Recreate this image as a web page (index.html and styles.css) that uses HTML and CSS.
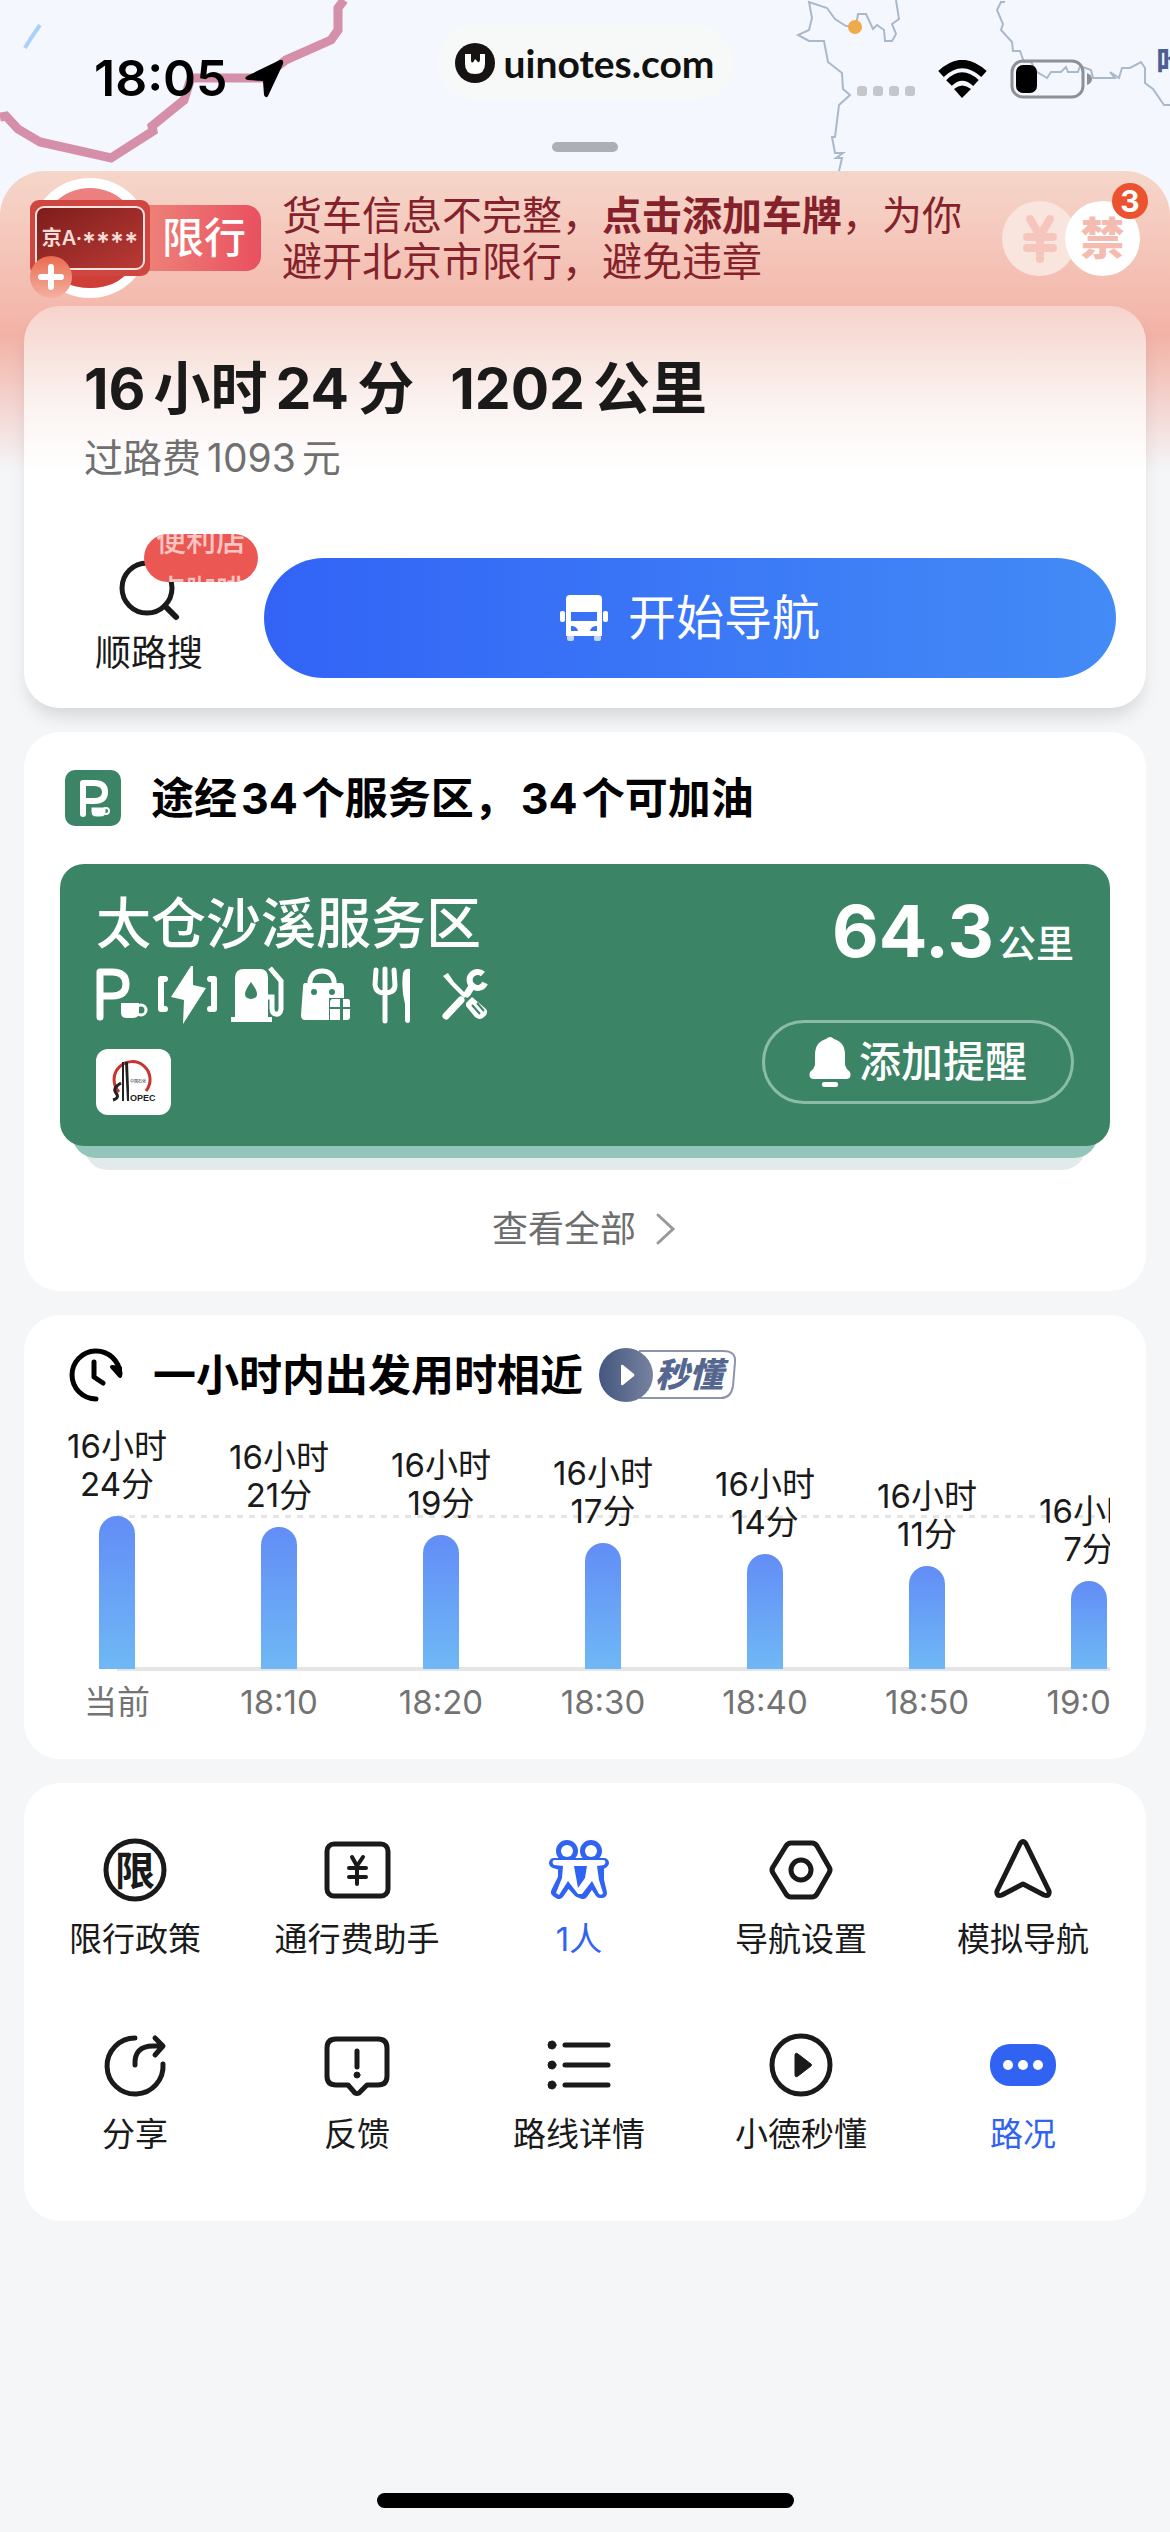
FILE: index.html
```html
<!DOCTYPE html>
<html lang="zh-CN">
<head>
    <meta charset="UTF-8">
    <meta name="viewport" content="width=device-width, initial-scale=1.0">
    <title>路线规划</title>
    <link rel="stylesheet" href="styles.css">
</head>
<body>
    <header class="top">
        <!-- mapa de fundo -->
        <svg class="map" viewBox="0 0 1170 220" preserveAspectRatio="xMidYMin slice" aria-hidden="true">
            <path d="M0 117 L6 116 L18 129 L40 142 L111 158 L153 131 L152 126 L184 100 L191 78 L262 78 L286 60 L331 40 L338 30 L338 8 L344 0" fill="none" stroke="#d68fa8" stroke-width="9"/>
            <path d="M40 25 L31 38 L25 48" fill="none" stroke="#a9d1fb" stroke-width="4"/>
            <g fill="none" stroke="#a9b9cb" stroke-width="2">
                <path d="M896 0 L899 19 L892 24 L896 34 L892 41 L885 41 L884 30 L877 25 L873 29 L866 14 L858 14 L856 26 L846 26 L835 19 L827 8 L809 2 L812 18 L809 30 L798 35 L809 41 L824 41 L828 62 L842 73 L843 89 L850 95 L839 105 L835 137 L832 137 L835 153 L843 153 L836 158 L842 158 L839 171"/>
                <path d="M1005 2 L1001 2 L997 10 L1003 24 L1001 30 L1012 42 L1013 51 L1020 51 L1024 62 L1031 62 L1037 72 L1047 78 L1051 72 L1061 72 L1066 67 L1068 72 L1078 72 L1080 66 L1091 70 L1093 78 L1115 78 L1110 72 L1119 78 L1122 68 L1130 68 L1141 62 L1145 68 L1145 83 L1153 89 L1164 105 L1170 105"/>
            </g>
            <circle cx="855" cy="27" r="7" fill="#eeaa4b"/>
            <text class="map-city" x="1156" y="75">哈尔滨</text>
        </svg>

        <div class="status">
            <div class="status-left">
                <span class="time">18:05</span>
                <svg width="40" height="40" viewBox="0 0 40 40" aria-hidden="true"><path d="M36 1 Q40 0 39 5 L24 37 Q22 40 20 36 L19 22 L4 21 Q-1 20 3 17 Z"/></svg>
            </div>
            <div class="watermark">
                <svg width="40" height="40" viewBox="0 0 40 40" aria-hidden="true">
                    <circle cx="20" cy="20" r="20" fill="#161312"/>
                    <path d="M10 11 L16 11 L16 18 Q17 21 19 18 L20 16 L22 18 Q24 21 25 17 L25 11 L30 11 L30 21 Q30 31 20 31 Q10 31 10 21 Z" fill="#fff"/>
                </svg>
                <span>uinotes.com</span>
            </div>
            <div class="status-right">
                <span class="dots"><i></i><i></i><i></i><i></i></span>
                <svg width="51" height="38" viewBox="0 0 51 38" aria-hidden="true">
                    <path d="M4 14 Q25 -6 47 14" fill="none" stroke="#000" stroke-width="8"/>
                    <path d="M12 23 Q25 10 39 23" fill="none" stroke="#000" stroke-width="8"/>
                    <path d="M17 29 Q25 22 34 29 L25 38 Z"/>
                </svg>
                <svg width="82" height="40" viewBox="0 0 82 40" aria-hidden="true">
                    <rect x="2" y="2" width="71" height="36" rx="11" fill="none" stroke="#8f9095" stroke-width="3"/>
                    <rect x="6" y="6" width="21" height="28" rx="7"/>
                    <path d="M77 14 Q82 16 82 20 Q82 24 77 26 Z" fill="#8f9095"/>
                </svg>
            </div>
        </div>
        <div class="handle"></div>
    </header>

    <main class="sheet">
        <a class="notice" href="#plate">
            <svg class="plate" width="232" height="122" viewBox="0 0 232 122" aria-hidden="true">
                <defs>
                    <linearGradient id="tag"><stop offset="0" stop-color="#ef8c7e"/><stop offset="1" stop-color="#e9505f"/></linearGradient>
                    <linearGradient id="dark" x1="0" y1="0" x2="1" y2="1"><stop offset="0" stop-color="#7c1d1b"/><stop offset="1" stop-color="#bb3a36"/></linearGradient>
                    <linearGradient id="plus" x1="0" y1="0" x2="0" y2="1"><stop offset="0" stop-color="#ea6c50"/><stop offset="1" stop-color="#f4b09f"/></linearGradient>
                </defs>
                <circle cx="60" cy="60" r="60" fill="#fff"/>
                <circle cx="60" cy="60" r="50" fill="#ec8080"/>
                <path d="M14 80 H107 Q94 110 60 110 Q26 110 14 80 Z" fill="#cf3e37"/>
                <rect x="90" y="27" width="141" height="66" rx="15" fill="url(#tag)"/>
                <rect x="0" y="22" width="120" height="76" rx="9" fill="#cf4540"/>
                <rect x="6" y="29" width="108" height="62" rx="8" fill="url(#dark)" stroke="#fbe2de" stroke-width="2"/>
                <text class="plate-no" x="60" y="67">京A·<tspan class="plate-mask" dy="6">****</tspan></text>
                <text class="plate-tag" x="174" y="75">限行</text>
                <circle cx="21" cy="99" r="21" fill="url(#plus)"/>
                <path d="M21 89 V109 M11 99 H31" stroke="#fff" stroke-width="6" stroke-linecap="round"/>
            </svg>
            <p class="notice-text">货车信息不完整，<strong>点击添加车牌</strong>，为你避开北京市限行，避免违章</p>
            <span class="limits">
                <span class="limit limit-fee">
                    <svg width="34" height="48" viewBox="0 0 34 48" aria-hidden="true"><path d="M7 4 L17 21 L27 4 M4 22 H30 M4 33 H30 M17 21 V44" fill="none" stroke="#f6c6bc" stroke-width="8" stroke-linecap="round" stroke-linejoin="round"/></svg>
                </span>
                <span class="limit">禁</span>
                <b class="count">3</b>
            </span>
        </a>

        <section class="card summary">
            <h1 class="route"><b>16</b>小时<b>24</b>分<b class="dist">1202</b>公里</h1>
            <p class="toll">过路费<span>1093</span>元</p>
            <div class="actions">
                <button class="search" type="button">
                    <svg width="64" height="64" viewBox="0 0 64 64" aria-hidden="true"><circle cx="30" cy="30" r="25" fill="none" stroke="#1a1a1a" stroke-width="5"/><path d="M48 48 L59 59" stroke="#1a1a1a" stroke-width="6" stroke-linecap="round"/></svg>
                    <span>顺路搜</span>
                    <span class="hint"><i>便利店</i><i>点咖啡</i></span>
                </button>
                <button class="start" type="button">
                    <svg width="48" height="48" viewBox="0 0 48 48" fill="#fff" aria-hidden="true">
                        <path fill-rule="evenodd" d="M10 1 H38 Q42 1 42 5 V42 H6 V5 Q6 1 10 1 Z M11 18 V27 H37 V18 Z M11 32 Q17 32 18 37 H11 Z M37 32 Q31 32 30 37 H37 Z"/>
                        <rect x="0" y="17" width="5" height="11" rx="2"/><rect x="43" y="17" width="5" height="11" rx="2"/>
                        <rect x="7" y="41" width="7" height="6" rx="2" opacity=".7"/><rect x="34" y="41" width="7" height="6" rx="2" opacity=".7"/>
                    </svg>
                    开始导航
                </button>
            </div>
        </section>

        <section class="card areas">
            <h2 class="head">
                <svg class="area-icon" width="56" height="56" viewBox="0 0 56 56" aria-hidden="true">
                    <rect width="56" height="56" rx="10" fill="#3b8466"/>
                    <path d="M18 44 V13 H29 Q40 13 40 22 Q40 31 29 31 H18" fill="none" stroke="#fff" stroke-width="6" stroke-linecap="round" stroke-linejoin="round"/>
                    <path d="M26 37 H41 V42 Q41 47 35 47 H32 Q26 47 26 42 Z" fill="#fff" stroke="#3b8466" stroke-width="1"/>
                    <circle cx="41" cy="41" r="3" fill="none" stroke="#fff" stroke-width="2"/>
                </svg>
                <span>途经<b>34</b>个服务区，<b>34</b>个可加油</span>
            </h2>
            <article class="service">
                <div>
                    <h3 class="service-name">太仓沙溪服务区</h3>
                    <svg class="facilities" width="396" height="60" viewBox="0 0 396 60" aria-hidden="true">
                        <g fill="none" stroke="#fff" stroke-width="7" stroke-linecap="round" stroke-linejoin="round">
                            <path d="M4 52 V7 H16 Q30 7 30 19 Q30 31 16 31 H4"/>
                            <path d="M69 14 H65 V44 H69 M114 14 H118 V44 H114" stroke-width="6"/>
                        </g>
                        <path d="M24 37 H44 V47 Q44 54 37 54 H30 Q24 54 24 47 Z" fill="#fff" stroke="#3b8466" stroke-width="2"/>
                        <circle cx="45" cy="45" r="5" fill="none" stroke="#fff" stroke-width="3"/>
                        <path d="M95 1 L75 32 L88 35 L87 59 L110 23 L97 20 L97 1 Z" fill="#fff"/>
                        <path fill-rule="evenodd" d="M139 52 V13 Q139 4 148 4 H164 Q172 4 172 13 V52 H176 V57 H135 V52 Z M155 17 Q143 33 155 34 Q167 33 155 17 Z" fill="#fff"/>
                        <path d="M174 3 L185 16 V44 Q184 50 180 49 Q176 49 176 43 V32 H172" fill="none" stroke="#fff" stroke-width="5"/>
                        <path d="M214 20 V16 Q216 6 226 6 Q236 6 238 16 V20" fill="none" stroke="#fff" stroke-width="5"/>
                        <path d="M209 18 H245 Q248 18 248 22 V33 H233 V55 H209 Q205 55 205 50 L207 22 Q207 18 209 18 Z" fill="#fff"/>
                        <circle cx="218" cy="27" r="3" fill="#3b8466"/><circle cx="236" cy="27" r="3" fill="#3b8466"/>
                        <path d="M234 37 Q234 34 237 34 H244 V42 H234 Z M247 34 H252 Q254 34 254 37 V42 H247 Z M234 44 H244 V55 H234 Z M247 44 H254 V52 Q254 55 251 55 H247 Z" fill="#fff"/>
                        <g fill="none" stroke="#fff" stroke-linecap="round">
                            <path d="M280 5 L279 20 Q280 28 288 28 Q299 28 299 20 L298 5 M289 4 V56" stroke-width="5"/>
                        </g>
                        <path d="M307 8 Q309 3 314 4 V55 Q314 58 312 58 Q309 58 309 55 V39 Q305 24 307 8 Z" fill="#fff"/>
                        <path d="M347 11 L352 8 L358 17 L371 30 L368 33 L355 20 Z M370 38 L376 32 L390 44 Q393 48 388 52 Q384 56 379 52 L370 41 Z" fill="#fff"/>
                        <path d="M350 51 L365 35 M371 29 L376 21" fill="none" stroke="#fff" stroke-width="7" stroke-linecap="round"/>
                        <path d="M387 9 A8 8 0 1 0 389 18" fill="none" stroke="#fff" stroke-width="6"/>
                        <path d="M376 40 L384 49 M381 38 L388 46" stroke="#3b8466" stroke-width="2"/>
                    </svg>
                    <!-- logo do posto -->
                    <svg class="brand" width="75" height="66" viewBox="0 0 75 66" role="img" aria-label="SINOPEC">
                        <rect width="75" height="66" rx="12" fill="#fff"/>
                        <path d="M23 43 A18 18 0 1 1 50 42" fill="none" stroke="#c8342f" stroke-width="3"/>
                        <path d="M26 13 H28 V52 H26 Z M29 13 H32 L33 40 V52 H31 Z" fill="#222"/>
                        <path d="M25 34 Q16 39 20 44 Q24 49 17 51" fill="none" stroke="#222" stroke-width="3"/>
                        <text class="brand-name" x="34" y="52">OPEC</text>
                        <text class="brand-cn" x="34" y="34">中国石化</text>
                    </svg>
                </div>
                <div class="service-side">
                    <p class="km"><b>64.3</b>公里</p>
                    <button class="remind" type="button">
                        <svg width="42" height="52" viewBox="0 0 42 52" fill="#fff" aria-hidden="true"><path d="M17 3 Q21 -1 25 3 Q36 6 36 19 V29 Q37 33 41 36 Q43 43 37 43 H5 Q-1 43 1 36 Q5 33 6 29 V19 Q6 6 17 3 Z"/><rect x="13" y="46" width="16" height="5" rx="2"/></svg>
                        添加提醒
                    </button>
                </div>
            </article>
            <a class="more" href="#areas">查看全部
                <svg width="24" height="34" viewBox="0 0 24 34" aria-hidden="true"><path d="M4 3 L19 17 L4 31" fill="none" stroke="#999" stroke-width="3" stroke-linecap="round"/></svg>
            </a>
        </section>

        <section class="card depart">
            <h2 class="head">
                <svg class="clock" width="54" height="54" viewBox="0 0 54 54" fill="none" stroke="#000" aria-hidden="true">
                    <path d="M27 51 A24 24 0 1 1 51 26" stroke-width="5" stroke-linecap="round"/>
                    <path d="M43 19 L51 28 L51 20 Z" fill="#000" stroke-width="4" stroke-linejoin="round"/>
                    <path d="M25 14 V29 L34 35" stroke-width="5" stroke-linecap="round" stroke-linejoin="round"/>
                </svg>
                <span>一小时内出发用时相近</span>
                <svg class="learn" width="138" height="54" viewBox="0 0 138 54" role="img" aria-label="秒懂">
                    <defs><linearGradient id="navy"><stop offset="0" stop-color="#44577f"/><stop offset="1" stop-color="#77829f"/></linearGradient></defs>
                    <path d="M40 3 H124 Q137 3 136 14 L134 38 Q132 50 122 50 H40" fill="#fff" stroke="#8c95ad" stroke-width="2"/>
                    <circle cx="27" cy="27" r="27" fill="url(#navy)"/>
                    <path d="M22 18 Q22 16 24 17 L35 26 Q36 27 35 28 L24 37 Q22 38 22 36 Z" fill="#fff"/>
                    <text class="learn-text" x="56" y="39">秒懂</text>
                </svg>
            </h2>
            <div class="chart">
                <div class="plot">
                    <div class="col"><span>16小时<br>24分</span><i class="bar" style="height: 153px"></i></div>
                    <div class="col"><span>16小时<br>21分</span><i class="bar" style="height: 142px"></i></div>
                    <div class="col"><span>16小时<br>19分</span><i class="bar" style="height: 134px"></i></div>
                    <div class="col"><span>16小时<br>17分</span><i class="bar" style="height: 126px"></i></div>
                    <div class="col"><span>16小时<br>14分</span><i class="bar" style="height: 115px"></i></div>
                    <div class="col"><span>16小时<br>11分</span><i class="bar" style="height: 103px"></i></div>
                    <div class="col"><span>16小时<br>7分</span><i class="bar" style="height: 88px"></i></div>
                </div>
                <div class="axis">
                    <span>当前</span><span>18:10</span><span>18:20</span><span>18:30</span><span>18:40</span><span>18:50</span><span>19:00</span>
                </div>
            </div>
        </section>

        <nav class="card tools">
            <button class="tool" type="button">
                <svg viewBox="0 0 64 64" aria-hidden="true"><circle cx="32" cy="32" r="29"/><text class="tool-char" x="32" y="47">限</text></svg>
                限行政策
            </button>
            <button class="tool" type="button">
                <svg viewBox="0 0 64 64" aria-hidden="true"><rect x="2" y="6" width="61" height="52" rx="7"/><path d="M27 19 L32 28 L38 19 M24 30 H41 M24 39 H41 M32 28 V46" stroke-width="4"/></svg>
                通行费助手
            </button>
            <button class="tool active" type="button">
                <!-- duas pessoas lado a lado -->
                <svg viewBox="0 0 64 64" aria-hidden="true">
                    <g class="pair-outline">
                        <circle cx="20" cy="13" r="6"/><circle cx="44" cy="13" r="6"/>
                        <path d="M7 25 H57 L52 28 L52 42 L55 55 H53 L45 43 L36 56 L31 54 L21 43 L12 56 L9 54 L16 40 V28 Z"/>
                    </g>
                    <circle class="fill-white" cx="20" cy="13" r="6"/><circle class="fill-white" cx="44" cy="13" r="6"/>
                    <path class="fill-white" d="M7 22 H57 Q60 24 57 27 L50 28 L52 42 L56 55 Q55 58 52 56 L45 43 L35 56 L31 56 L21 43 L12 57 L9 55 L15 40 L16 28 L7 27 Q4 24 7 22 Z"/>
                    <path d="M27 28 H40 L38 40 L31 50 Z" fill="#3163f2" stroke="none"/>
                </svg>
                1人
            </button>
            <button class="tool" type="button">
                <svg viewBox="0 0 64 64" aria-hidden="true"><path d="M22 5 H43 Q46 5 48 8 L60 29 Q62 32 60 35 L48 56 Q46 59 43 59 H22 Q19 59 17 56 L4 35 Q2 32 4 29 L17 8 Q19 5 22 5 Z"/><circle cx="32" cy="32" r="10"/></svg>
                导航设置
            </button>
            <button class="tool" type="button">
                <svg viewBox="0 0 64 64" aria-hidden="true"><path d="M29 6 Q32 1 35 6 L58 53 Q59 59 53 57 L32 46 L11 57 Q5 59 6 53 Z"/></svg>
                模拟导航
            </button>
            <button class="tool" type="button">
                <svg viewBox="0 0 64 64" aria-hidden="true"><path d="M32 5 A28 28 0 1 0 60 31 M32 32 Q31 13 50 13 H58 M52 5 L60 13 L52 22"/></svg>
                分享
            </button>
            <button class="tool" type="button">
                <svg viewBox="0 0 64 64" aria-hidden="true"><path d="M11 6 H53 Q62 6 62 15 V43 Q62 52 53 52 H42 L34 60 Q32 61 30 60 L23 52 H11 Q2 52 2 43 V15 Q2 6 11 6 Z M32 18 V34"/><circle class="dot" cx="32" cy="42" r="3"/></svg>
                反馈
            </button>
            <button class="tool" type="button">
                <svg viewBox="0 0 64 64" aria-hidden="true"><path d="M18 12 H61 M18 32 H61 M18 52 H61"/><circle class="dot" cx="5" cy="12" r="4"/><circle class="dot" cx="5" cy="32" r="4"/><circle class="dot" cx="5" cy="52" r="4"/></svg>
                路线详情
            </button>
            <button class="tool" type="button">
                <svg viewBox="0 0 64 64" aria-hidden="true"><circle cx="32" cy="32" r="29"/><path class="dot" d="M26 22 Q26 19 29 21 L42 31 Q43 32 42 33 L29 43 Q26 45 26 42 Z"/></svg>
                小德秒懂
            </button>
            <button class="tool active" type="button">
                <svg viewBox="0 0 64 64" aria-hidden="true"><rect x="-1" y="11" width="66" height="42" rx="20" fill="#3163f2" stroke="none"/><circle class="fill-white" cx="17" cy="32" r="5"/><circle class="fill-white" cx="32" cy="32" r="5"/><circle class="fill-white" cx="47" cy="32" r="5"/></svg>
                路况
            </button>
        </nav>
        <div class="home-bar"></div>
    </main>
</body>
</html>
```

FILE: styles.css
```css
* {
    box-sizing: border-box;
}
body {
    margin: 0;
    min-height: 100vh;
    display: flex;
    flex-direction: column;
    background-color: #f5f7ff;
    color: #1a1a1a;
    font-family: Inter, "Noto Sans CJK SC", sans-serif;
}
h1, h2, h3, p {
    margin: 0;
}
b, strong {
    font-weight: 700;
}
svg {
    display: block;
    flex: none;
}
i {
    font-style: normal;
}
button {
    border: none;
    background: none;
    padding: 0;
    color: inherit;
    font-family: inherit;
    cursor: pointer;
}
a {
    color: inherit;
    text-decoration: none;
}

/* topo */
.top {
    position: relative;
    padding: 25px 0 19px;
}
.map {
    position: absolute;
    top: 0;
    left: 0;
    width: 100%;
    height: 220px;
}
.map-city {
    font-size: 34px;
    font-weight: 700;
    fill: #4a5f95;
}
.status {
    position: relative;
    display: grid;
    grid-template-columns: 1fr auto 1fr;
    align-items: end;
}
.status-left, .status-right {
    display: flex;
    align-items: center;
    height: 43px;
}
.status-left {
    padding-left: 94px;
    gap: 16px;
    color: #000;
}
.time {
    font-size: 50px;
    font-weight: 600;
    line-height: 43px;
}
.watermark {
    display: flex;
    align-items: center;
    gap: 8px;
    height: 75px;
    padding: 0 18px;
    border-radius: 38px;
    background-color: #f7f8f8;
    color: #111;
    font-family: Lato, sans-serif;
    font-size: 39px;
    font-weight: 700;
    line-height: 42px;
}
.status-right {
    justify-content: flex-end;
    gap: 22px;
    padding-right: 78px;
}
.dots {
    display: flex;
    gap: 6px;
    padding-top: 24px;
}
.dots i {
    width: 10px;
    height: 10px;
    border-radius: 3px;
    background-color: #c5c6cb;
}
.handle {
    position: relative;
    width: 66px;
    height: 10px;
    margin: 42px auto 0;
    border-radius: 5px;
    background-color: #aeafb4;
}

/* painel */
.sheet {
    position: relative;
    flex: 1;
    display: flex;
    flex-direction: column;
    padding: 0 24px 24px;
    border-radius: 45px 45px 0 0;
    background: linear-gradient(#f6d6ca 0, #f4b9ad 135px, #f3b2a6 165px, #f4f6f8 300px);
}
.notice {
    display: flex;
    align-items: center;
    height: 135px;
    padding: 0 6px;
    color: #85212b;
}
.plate-no {
    font-size: 20px;
    font-weight: 600;
    fill: #f9dcd8;
    text-anchor: middle;
}
.plate-mask {
    font-size: 26px;
}
.plate-tag {
    font-size: 42px;
    font-weight: 500;
    fill: #fff;
    text-anchor: middle;
}
.notice-text {
    flex: 1;
    margin-left: 20px;
    font-size: 40px;
    line-height: 46px;
}
.limits {
    position: relative;
    display: flex;
    margin-left: 24px;
}
.limit {
    display: flex;
    align-items: center;
    justify-content: center;
    width: 75px;
    height: 75px;
    border-radius: 50%;
    background-color: #fff;
    color: #f4bcb0;
    font-size: 44px;
    font-weight: 900;
    line-height: 50px;
}
.limit-fee {
    margin-right: -12px;
    background-color: #fae4de;
}
.count {
    position: absolute;
    top: -18px;
    right: -8px;
    width: 36px;
    height: 36px;
    border-radius: 18px;
    background-color: #ea5230;
    color: #fff;
    font-size: 30px;
    line-height: 36px;
    text-align: center;
}

.card {
    margin-bottom: 24px;
    border-radius: 36px;
    background-color: #fff;
}
.summary {
    padding: 51px 30px 30px 60px;
    background: linear-gradient(#f7d3cc 0, #f8e4de 52px, #fbf2f0 96px, #fff 165px);
    box-shadow: 0 12px 18px -4px rgba(0, 0, 0, 0.13);
}
.route {
    font-size: 57px;
    font-weight: 700;
    line-height: 64px;
}
.route b {
    margin: 0 8px;
}
.route b:first-child {
    margin-left: 0;
}
.route .dist {
    margin-left: 36px;
}
.toll {
    margin-top: 13px;
    color: #707070;
    font-size: 39px;
    line-height: 48px;
}
.toll span {
    margin: 0 6px;
}
.actions {
    display: flex;
    gap: 50px;
    margin-top: 76px;
}
.search {
    position: relative;
    display: flex;
    flex-direction: column;
    align-items: center;
    gap: 9px;
    width: 130px;
    font-size: 36px;
    line-height: 44px;
}
.hint {
    position: absolute;
    top: -24px;
    left: 60px;
    width: 114px;
    height: 48px;
    overflow: hidden;
    border-radius: 24px;
    background-color: #eb5753;
    color: #fbc5c2;
    font-size: 30px;
    font-weight: 500;
    text-align: center;
}
.hint i {
    display: block;
    margin-top: -16px;
}
.hint i + i {
    margin-top: 6px;
}
.start {
    flex: 1;
    display: flex;
    align-items: center;
    justify-content: center;
    gap: 20px;
    height: 120px;
    border-radius: 60px;
    background: linear-gradient(90deg, #3263f6, #438bf6);
    color: #fff;
    font-size: 48px;
    line-height: 60px;
}

.head {
    display: flex;
    align-items: center;
    color: #000;
    font-size: 43px;
    font-weight: 700;
    line-height: 50px;
}
.head b {
    margin: 0 4px;
}

/* áreas de serviço */
.areas {
    position: relative;
    z-index: 0;
    padding: 38px 36px 37px;
}
.area-icon {
    margin: 0 30px 0 5px;
}
.service {
    position: relative;
    display: flex;
    justify-content: space-between;
    margin-top: 38px;
    padding: 27px 36px 31px;
    border-radius: 24px;
    background-color: #3b8466;
    color: #fff;
}
/* cartões empilhados atrás do principal */
.service::before, .service::after {
    content: "";
    position: absolute;
    z-index: -1;
    height: 60px;
    border-radius: 0 0 24px 24px;
}
.service::before {
    bottom: -24px;
    left: 24px;
    right: 24px;
    background-color: #e2ebe9;
}
.service::after {
    bottom: -12px;
    left: 12px;
    right: 12px;
    background-color: #94c5bb;
}
.service-name {
    font-size: 55px;
    font-weight: 500;
    line-height: 64px;
}
.facilities {
    margin-top: 10px;
}
.brand {
    margin-top: 24px;
}
.brand-name {
    font-family: "Liberation Sans", sans-serif;
    font-size: 9px;
    font-weight: 700;
    fill: #222;
}
.brand-cn {
    font-size: 4px;
    fill: #222;
}
.service-side {
    display: flex;
    flex-direction: column;
    align-items: flex-end;
}
.km {
    font-size: 38px;
    font-weight: 500;
    line-height: 50px;
}
.km b {
    margin-right: 4px;
    font-size: 72px;
    line-height: 80px;
}
.remind {
    display: flex;
    align-items: center;
    justify-content: center;
    gap: 8px;
    width: 312px;
    height: 84px;
    margin-top: 49px;
    border: 3px solid #8bbcaa;
    border-radius: 42px;
    color: #fff;
    font-size: 42px;
    font-weight: 500;
    line-height: 50px;
}
.more {
    display: flex;
    align-items: center;
    justify-content: center;
    gap: 18px;
    margin-top: 58px;
    color: #6e6e6e;
    font-size: 36px;
    line-height: 50px;
}

/* gráfico de horários */
.depart {
    position: relative;
    z-index: 0;
    padding: 33px 36px 38px 12px;
}
.clock {
    margin: 0 30px 0 33px;
}
.learn {
    margin-left: 16px;
}
.learn-text {
    font-size: 34px;
    font-weight: 800;
    font-style: italic;
    fill: #56678f;
}
.chart {
    position: relative;
    z-index: 0;
    margin-top: 25px;
    overflow: hidden;
    font-size: 33px;
    line-height: 38px;
    text-align: center;
}
.plot {
    position: relative;
    display: flex;
    align-items: flex-end;
}
.plot::before {
    content: "";
    position: absolute;
    left: 81px;
    right: 0;
    bottom: 151px;
    height: 3px;
    background: repeating-linear-gradient(90deg, #e5e5e5 0, #e5e5e5 6px, transparent 6px, transparent 12px);
}
.plot::after {
    content: "";
    position: absolute;
    left: 81px;
    right: 0;
    bottom: -2px;
    z-index: -1;
    height: 4px;
    background-color: #e5e5e5;
}
.col {
    position: relative;
    flex: none;
    display: flex;
    flex-direction: column;
    align-items: center;
    gap: 13px;
    width: 162px;
}
.bar {
    width: 36px;
    border-radius: 18px 18px 0 0;
    background: linear-gradient(#628df6, #6fb8f5);
}
.axis {
    display: flex;
    margin-top: 14px;
    color: #737373;
}
.axis span {
    flex: none;
    width: 162px;
}

/* ferramentas */
.tools {
    display: grid;
    grid-template-columns: repeat(5, 1fr);
    row-gap: 72px;
    padding: 55px 12px 65px 0;
}
.tool {
    display: flex;
    flex-direction: column;
    align-items: center;
    gap: 15px;
    font-size: 33px;
    line-height: 44px;
}
.tool svg {
    width: 64px;
    height: 64px;
    overflow: visible;
    fill: none;
    stroke: #1a1a1a;
    stroke-width: 5;
    stroke-linecap: round;
    stroke-linejoin: round;
}
.tool-char {
    font-size: 40px;
    font-weight: 700;
    fill: #1a1a1a;
    stroke: none;
    text-anchor: middle;
}
.tool .dot {
    fill: #1a1a1a;
    stroke: #1a1a1a;
    stroke-width: 1;
}
.tool.active {
    color: #3163f2;
}
.tool.active svg {
    stroke: #3163f2;
}
.pair-outline {
    fill: #3163f2;
    stroke-width: 10;
}
.tool .fill-white {
    fill: #fff;
    stroke: none;
}
.home-bar {
    width: 417px;
    height: 15px;
    margin: auto auto 0;
    border-radius: 8px;
    background-color: #000;
}
```
